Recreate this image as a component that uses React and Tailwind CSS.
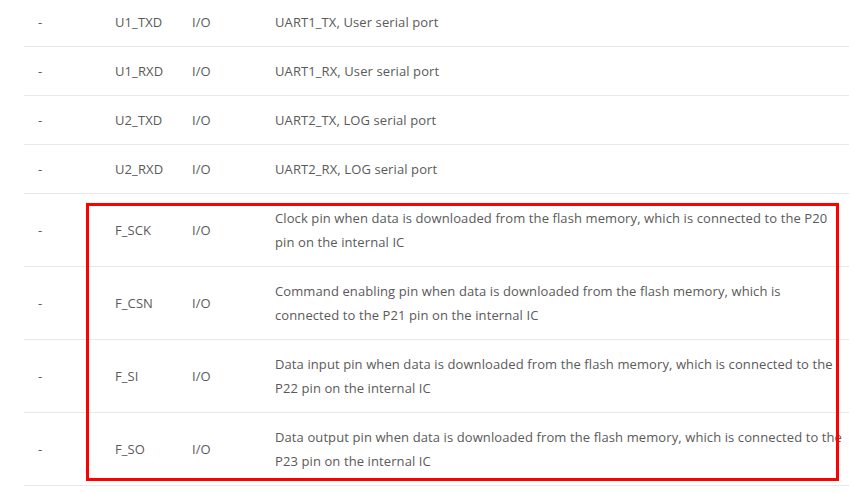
import React from 'react';

const rows = [
  { name: 'U1_TXD', desc: ['UART1_TX, User serial port'] },
  { name: 'U1_RXD', desc: ['UART1_RX, User serial port'] },
  { name: 'U2_TXD', desc: ['UART2_TX, LOG serial port'] },
  { name: 'U2_RXD', desc: ['UART2_RX, LOG serial port'] },
  {
    name: 'F_SCK',
    desc: [
      'Clock pin when data is downloaded from the flash memory, which is connected to the P20',
      'pin on the internal IC',
    ],
  },
  {
    name: 'F_CSN',
    desc: [
      'Command enabling pin when data is downloaded from the flash memory, which is',
      'connected to the P21 pin on the internal IC',
    ],
  },
  {
    name: 'F_SI',
    desc: [
      'Data input pin when data is downloaded from the flash memory, which is connected to the',
      'P22 pin on the internal IC',
    ],
  },
  {
    name: 'F_SO',
    desc: [
      'Data output pin when data is downloaded from the flash memory, which is connected to the',
      'P23 pin on the internal IC',
    ],
  },
];

const App = () => {
  return (
    <div
      className="relative w-[849px] h-[493px] overflow-hidden bg-white text-[13px] leading-6 tracking-[0.1px] text-[#5a5a5a]"
      style={{ fontFamily: '"Open Sans", "Noto Sans", sans-serif' }}
    >
      <div className="ml-6 mt-[-2px] w-[900px]">
        {rows.map((row) => (
          <div
            key={row.name}
            className="grid grid-cols-[77px_77px_83px_1fr] items-center border-b border-[#e8e8e8] py-3"
          >
            <div className="pl-[14px]">-</div>
            <div className="pl-[14px]">{row.name}</div>
            <div className="pl-[14px]">I/O</div>
            <div className="pl-[14px] whitespace-nowrap">
              {row.desc.map((line) => (
                <div key={line}>{line}</div>
              ))}
            </div>
          </div>
        ))}
      </div>

      {/* highlight annotation */}
      <div className="absolute left-[86px] top-[203px] w-[753px] h-[278px] border-[3px] border-[#ff0000] pointer-events-none" />
    </div>
  );
};

export default App;
